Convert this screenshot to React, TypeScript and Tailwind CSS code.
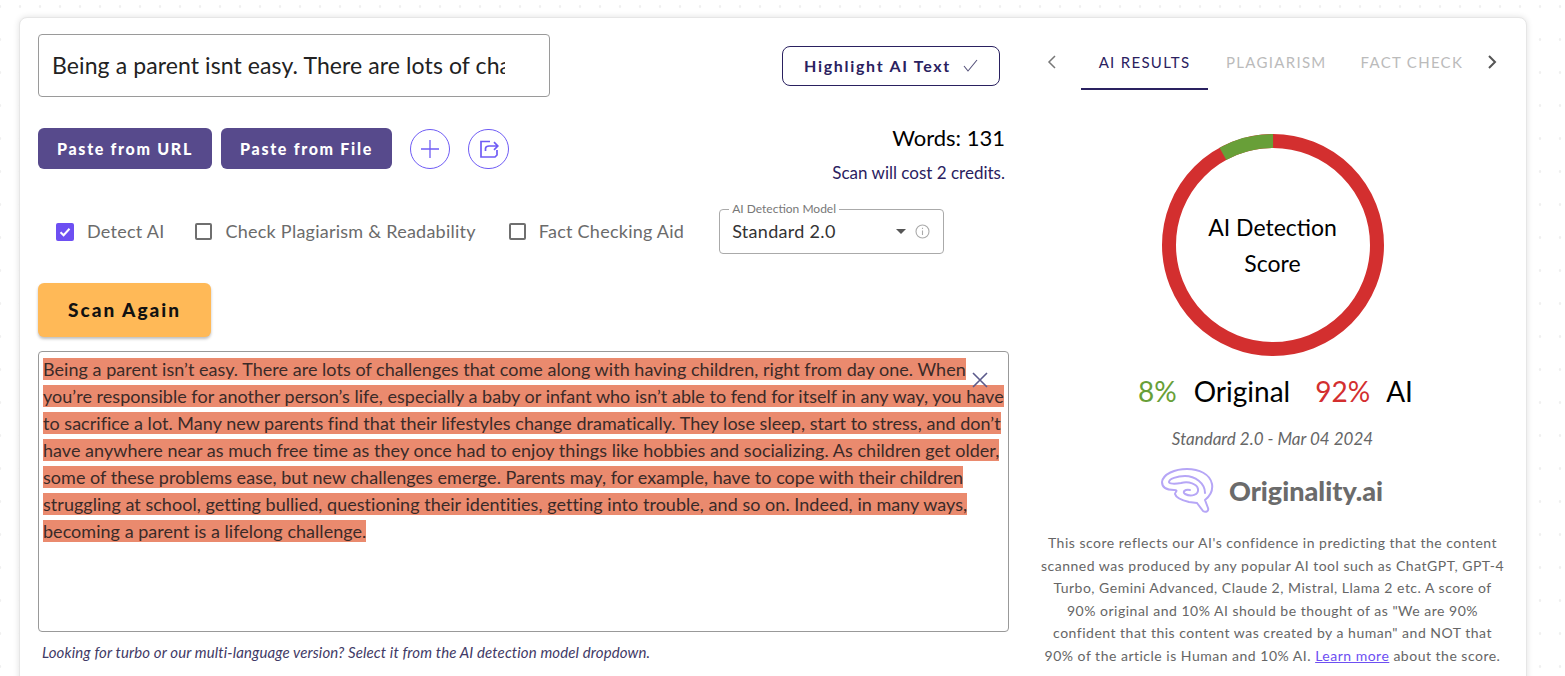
import React from 'react';

const textLines = [
  'Being a parent isn’t easy. There are lots of challenges that come along with having children, right from day one. When',
  'you’re responsible for another person’s life, especially a baby or infant who isn’t able to fend for itself in any way, you have',
  'to sacrifice a lot. Many new parents find that their lifestyles change dramatically. They lose sleep, start to stress, and don’t',
  'have anywhere near as much free time as they once had to enjoy things like hobbies and socializing. As children get older,',
  'some of these problems ease, but new challenges emerge. Parents may, for example, have to cope with their children',
  'struggling at school, getting bullied, questioning their identities, getting into trouble, and so on. Indeed, in many ways,',
  'becoming a parent is a lifelong challenge.',
];

function Check({ checked, label }: { checked?: boolean; label: string }) {
  return (
    <div className="flex items-center gap-[13px]">
      {checked ? (
        <div className="w-[18px] h-[18px] rounded-[2px] bg-[#6d4ff2] flex items-center justify-center">
          <svg width="14" height="14" viewBox="0 0 14 14" fill="none">
            <path d="M2.5 7.2 L5.6 10.2 L11.5 3.8" stroke="white" strokeWidth="2" />
          </svg>
        </div>
      ) : (
        <div className="w-[17px] h-[17px] rounded-[2px] border-2 border-[#6f6f6f]" />
      )}
      <span className="text-[18px] tracking-[0.25px] text-[#6b6b6b]">{label}</span>
    </div>
  );
}

function Brain() {
  return (
    <svg width="62" height="52" viewBox="0 0 62 52" fill="none" stroke="#b6a6f6" strokeWidth="2" strokeLinecap="round" strokeLinejoin="round">
      <path d="M40 38 L46 46 C49 48 52 46 51 43 L48 35 C53 31 56 25 55 19 C53 9 42 4 30 4 C18 4 6 9 5 17 C5 23 11 25 17 25 C22 25 18 27 18 29 C19 33 24 35 32 37 L40 38" />
      <path d="M48 28 C48 18 38 11 28 11 C20 11 12 14 12 17 C12 19 18 19 24 18 C32 16 40 19 41 24 C42 30 34 32 28 29 C25 27 28 24 33 25" />
    </svg>
  );
}

export default function App() {
  return (
    <div className="h-[676px] overflow-hidden bg-white bg-[radial-gradient(circle,#f0f0f0_1px,transparent_1.6px)] bg-[length:20px_33px] bg-[position:10px_-10px] pt-[17px] pl-[19px] font-['Lato',sans-serif] text-black">
      <div className="w-[1508px] h-[720px] flex border border-[#e6e6e6] rounded-lg shadow-[0_0_6px_rgba(0,0,0,0.12)] bg-white">
        {/* left column */}
        <div className="w-[990px] pl-[18px] pt-4 shrink-0">
          <div className="flex items-center justify-between">
            <div className="w-[512px] h-[63px] border border-[#9a9a9a] rounded flex items-center pl-[13px] overflow-hidden">
              <div className="w-[453px] overflow-hidden whitespace-nowrap text-[23px] text-[#222] tracking-[0.1px]">
                Being a parent isnt easy. There are lots of challenges
              </div>
            </div>
            <button className="w-[218px] h-10 mr-[10px] border border-[#2a2160] rounded-lg flex items-center justify-center gap-3 text-[16px] font-bold tracking-[1.7px] text-[#2a2160]">
              Highlight AI Text
              <svg width="15" height="13" viewBox="0 0 15 13" fill="none" stroke="#55517a" strokeWidth="1.1">
                <path d="M1 7 L5 12 L14 1" />
              </svg>
            </button>
          </div>

          <div className="flex items-start justify-between mt-[31px]">
            <div className="flex items-center">
              <button className="w-[174px] h-[41px] rounded-md bg-[#574a8c] text-white text-[16px] font-black tracking-[1.7px]">
                Paste from URL
              </button>
              <button className="w-[171px] h-[41px] ml-[9px] rounded-md bg-[#574a8c] text-white text-[16px] font-black tracking-[1.7px]">
                Paste from File
              </button>
              <div className="w-10 h-10 ml-[18px] rounded-full border border-[#6f5cf5] flex items-center justify-center">
                <svg width="20" height="20" viewBox="0 0 20 20" stroke="#6f5cf5" strokeWidth="1.3">
                  <path d="M10 1 V19 M1 10 H19" />
                </svg>
              </div>
              <div className="w-[41px] h-10 ml-[18px] rounded-full border border-[#6f5cf5] flex items-center justify-center">
                <svg width="20" height="20" viewBox="0 0 20 20" fill="none" stroke="#6f5cf5" strokeWidth="1.7">
                  <path d="M11 2.5 H2 V18 H16 L18 16 V11" />
                  <path d="M6.5 12 V9.5 C 6.5 8 8 7 10 7 H18.5 M15 3.2 L18.8 7 L15 10.8" />
                </svg>
              </div>
            </div>
            <div className="mr-[5px] text-right">
              <div className="text-[22px] leading-[22px] mt-[-1px]">Words: 131</div>
              <div className="text-[17px] leading-5 mt-[14px] text-[#2a2160]">Scan will cost 2 credits.</div>
            </div>
          </div>

          <div className="flex items-center mt-[26px] pl-[18px]">
            <Check checked label="Detect AI" />
            <div className="w-[31px]" />
            <Check label="Check Plagiarism & Readability" />
            <div className="w-[33px]" />
            <Check label="Fact Checking Aid" />
            <fieldset className="w-[225px] h-[50px] ml-[35px] mt-[-5px] border border-[#aaa] rounded pl-[10px] pr-[13px]">
              <legend className="text-xs leading-[10px] text-[#777] px-[3px] ml-[-1px]">AI Detection Model</legend>
              <div className="flex items-center h-[34px]">
                <span className="text-[18px] tracking-[0.3px] text-[#333] ml-[2px]">Standard 2.0</span>
                <div className="ml-auto w-0 h-0 border-x-[5px] border-x-transparent border-t-[5px] border-t-[#555]" />
                <svg className="ml-[9px]" width="15" height="15" viewBox="0 0 15 15" fill="none" stroke="#aaa" strokeWidth="1.1">
                  <circle cx="7.5" cy="7.5" r="6.5" />
                  <path d="M7.5 6.5 V11 M7.5 3.8 V5" />
                </svg>
              </div>
            </fieldset>
          </div>

          <button className="block w-[173px] h-[54px] mt-[29px] rounded-md bg-[#ffb957] shadow-[0_2px_3px_rgba(0,0,0,0.25)] text-[19px] font-black tracking-[2px] text-[#111]">
            Scan Again
          </button>

          <div className="relative w-[971px] h-[281px] mt-[14px] border border-[#999] rounded pl-1 pt-[6px]">
            {textLines.map((line) => (
              <div key={line} className="h-[27px] whitespace-nowrap">
                <span className="inline-block h-[22px] leading-[22px] bg-[#ea8a6e] text-[18px] tracking-[0.03px] text-[#3a2a28]">{line}</span>
              </div>
            ))}
            <svg className="absolute top-[20px] left-[933px]" width="16" height="16" viewBox="0 0 16 16" stroke="#5b5a8c" strokeWidth="1.6">
              <path d="M1 1 L15 15 M15 1 L1 15" />
            </svg>
          </div>
          <div className="mt-[9px] ml-1 text-[15px] tracking-[0.12px] italic text-[#3f3a66]">
            Looking for turbo or our multi-language version? Select it from the AI detection model dropdown.
          </div>
        </div>

        {/* right column */}
        <div className="flex-1 flex flex-col items-center">
          <div className="w-full flex items-start h-[73px] pl-[37px] mt-[15px]">
            <svg className="mt-[21px]" width="10" height="16" viewBox="0 0 10 16" fill="none" stroke="#777" strokeWidth="1.5">
              <path d="M8 2 L2 8 L8 14" />
            </svg>
            <div className="w-[127px] h-[57px] ml-6 border-b-2 border-[#2a2160] text-center pt-[18px] text-[15px] tracking-[1.3px] text-[#2a2160]">
              AI RESULTS
            </div>
            <div className="ml-[18px] pt-[18px] text-[15px] tracking-[1.3px] text-[#bbb]">PLAGIARISM</div>
            <div className="ml-[34px] pt-[18px] text-[15px] tracking-[1.3px] text-[#bbb]">FACT CHECK</div>
            <svg className="ml-[24px] mt-[21px]" width="10" height="16" viewBox="0 0 10 16" fill="none" stroke="#555" strokeWidth="2">
              <path d="M2 2 L8 8 L2 14" />
            </svg>
          </div>

          <div className="grid place-items-center mt-[28px] ml-[9px]">
            <svg className="[grid-area:1/1]" width="222" height="222" viewBox="0 0 222 222" fill="none">
              <circle cx="111" cy="111" r="104" stroke="#d32f2f" strokeWidth="14" />
              <circle cx="111" cy="111" r="104" stroke="#689f38" strokeWidth="14" strokeDasharray="52.3 601.2" transform="rotate(-118.8 111 111)" />
            </svg>
            <div className="[grid-area:1/1] text-center text-[23px] leading-9">
              AI Detection
              <br />
              Score
            </div>
          </div>

          <div className="flex items-center mt-[15px] ml-[15px] text-[28px] leading-10 whitespace-nowrap">
            <span className="text-[#689f38]">8%</span>
            <span className="ml-[17px]">Original</span>
            <span className="ml-[25px] text-[#d32f2f]">92%</span>
            <span className="ml-[16px]">AI</span>
          </div>
          <div className="mt-[18px] ml-[9px] text-[17px] leading-5 italic text-[#666]">Standard 2.0 - Mar 04 2024</div>
          <div className="flex items-center mt-[16px] ml-[4px] gap-[10px]">
            <Brain />
            <span className="text-[27px] leading-9 font-black text-[#6b6b6b]">Originality.ai</span>
          </div>
          <div className="mt-[15px] ml-[9px] text-center text-[14px] leading-[22.6px] tracking-[0.5px] text-[#666] whitespace-nowrap">
            <div>This score reflects our AI&apos;s confidence in predicting that the content</div>
            <div>scanned was produced by any popular AI tool such as ChatGPT, GPT-4</div>
            <div>Turbo, Gemini Advanced, Claude 2, Mistral, Llama 2 etc. A score of</div>
            <div>90% original and 10% AI should be thought of as &quot;We are 90%</div>
            <div>confident that this content was created by a human&quot; and NOT that</div>
            <div>
              90% of the article is Human and 10% AI. <span className="text-[#6d4ff2] underline">Learn more</span> about the score.
            </div>
          </div>
        </div>
      </div>
    </div>
  );
}
